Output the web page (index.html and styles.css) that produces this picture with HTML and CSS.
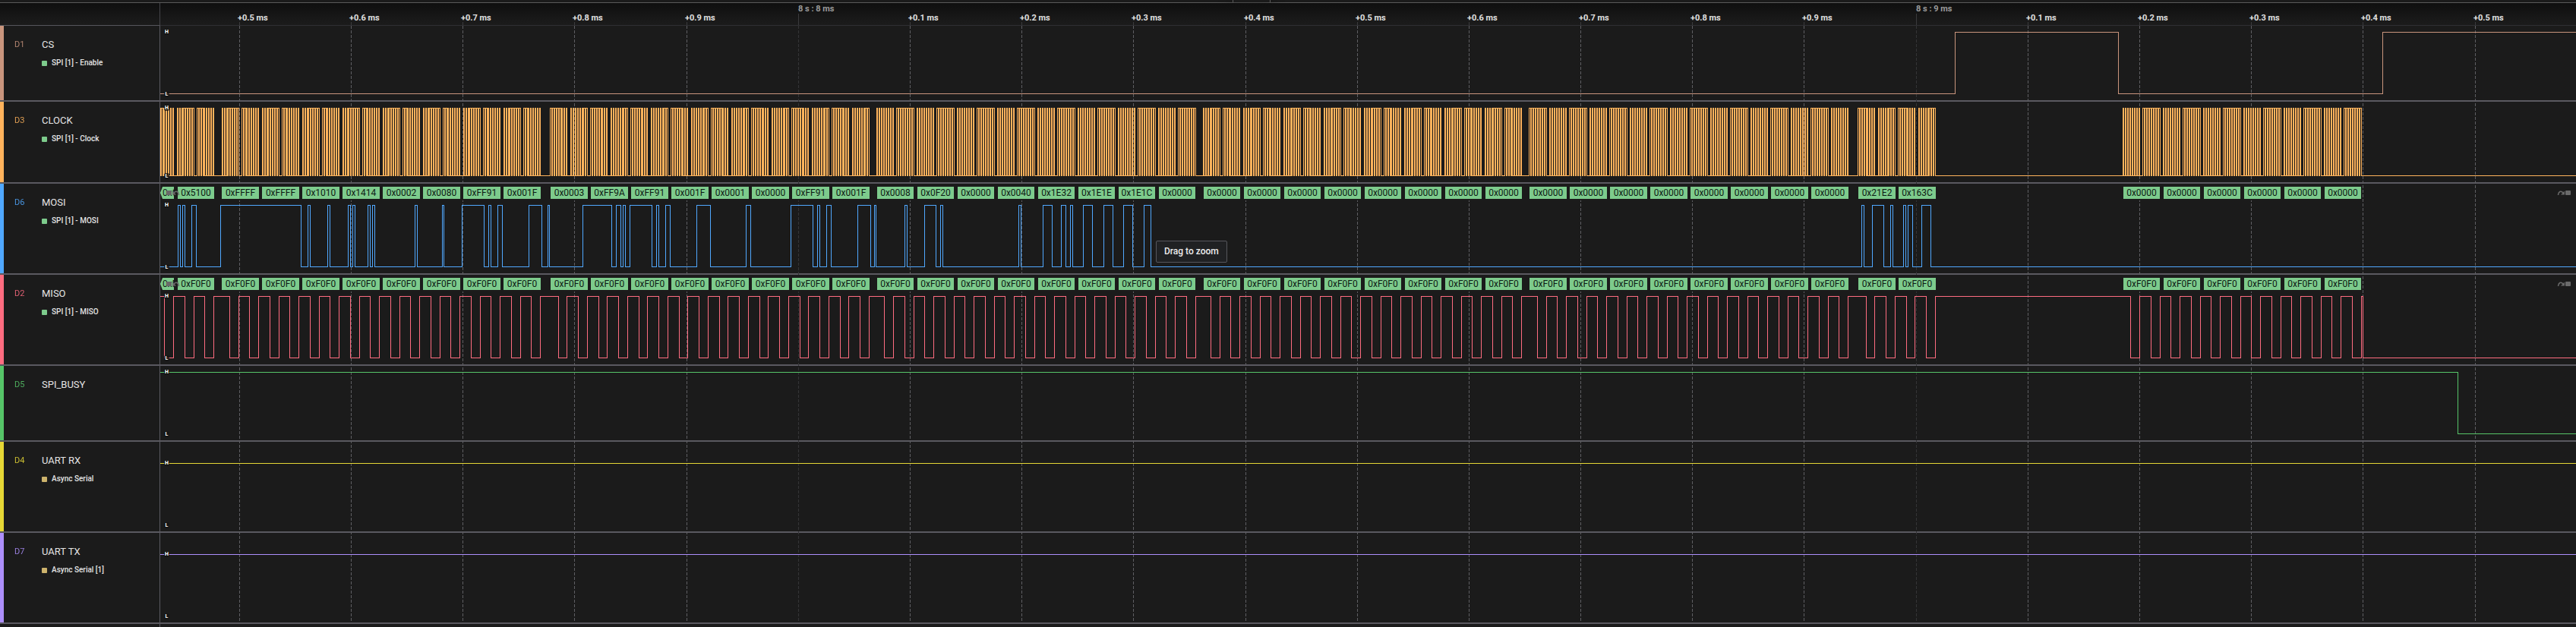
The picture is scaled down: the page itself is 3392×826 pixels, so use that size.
FILE: index.html
```html
<!DOCTYPE html>
<html lang="en">
<head>
<meta charset="utf-8">
<title>Logic analyzer capture</title>
<link rel="stylesheet" href="styles.css">
</head>
<body>
<div class="topbar"><div class="handle"></div></div>
<main class="board">
  <svg class="grid" id="grid" aria-hidden="true"></svg>
  <header class="ruler">
    <div class="corner"></div>
    <div class="scale" id="scale"></div>
  </header>

  <section class="channel short cs">
    <div class="info"><span class="pin">D1</span><div class="names"><span class="name">CS</span><span class="analyzer spi">SPI [1] - Enable</span></div></div>
    <div class="plot" data-signal="cs"></div>
  </section>
  <section class="channel medium clock">
    <div class="info"><span class="pin">D3</span><div class="names"><span class="name">CLOCK</span><span class="analyzer spi">SPI [1] - Clock</span></div></div>
    <div class="plot" data-signal="clock"></div>
  </section>
  <section class="channel mosi">
    <div class="info"><span class="pin">D6</span><div class="names"><span class="name">MOSI</span><span class="analyzer spi">SPI [1] - MOSI</span></div></div>
    <div class="plot" data-signal="mosi"><div class="tooltip" role="tooltip">Drag to zoom</div></div>
  </section>
  <section class="channel miso">
    <div class="info"><span class="pin">D2</span><div class="names"><span class="name">MISO</span><span class="analyzer spi">SPI [1] - MISO</span></div></div>
    <div class="plot" data-signal="miso"></div>
  </section>
  <section class="channel short busy">
    <div class="info"><span class="pin">D5</span><div class="names"><span class="name">SPI_BUSY</span></div></div>
    <div class="plot" data-signal="busy"></div>
  </section>
  <section class="channel rx">
    <div class="info"><span class="pin">D4</span><div class="names"><span class="name">UART RX</span><span class="analyzer serial">Async Serial</span></div></div>
    <div class="plot" data-signal="rx"></div>
  </section>
  <section class="channel tx">
    <div class="info"><span class="pin">D7</span><div class="names"><span class="name">UART TX</span><span class="analyzer serial">Async Serial [1]</span></div></div>
    <div class="plot" data-signal="tx"></div>
  </section>
  <div class="tail"></div>
</main>
<script src="traces.js"></script>
</body>
</html>
```

FILE: styles.css
```css
* { box-sizing: border-box; }

body {
  margin: 0;
  min-height: 100vh;
  display: flex;
  flex-direction: column;
  overflow: hidden;
  background: #1b1b1b;
  color: #e4e4e4;
  font-family: Roboto, "Liberation Sans", sans-serif;
}

.topbar {
  height: 4px;
  border-bottom: 1px solid #5a5a5a;
}

.handle {
  position: absolute;
  top: 0;
  left: 1623px;
  width: 50px;
  height: 3px;
  border: solid #5a5a5a;
  border-width: 0 1px;
  box-shadow: 0 8px 16px 4px rgba(0, 0, 0, 0.45);
}

.board {
  position: relative;
  flex: 1;
  display: flex;
  flex-direction: column;
}

.grid {
  position: absolute;
  top: 0;
  left: 211px;
  width: calc(100% - 211px);
  height: 816px;
  shape-rendering: crispEdges;
}

.grid line { stroke: #5e5e62; stroke-dasharray: 4 2; }
.grid .major { stroke: #343436; }
.grid .tick { stroke: #3a3a3c; stroke-dasharray: none; }

.ruler {
  display: flex;
  height: 30px;
  background: linear-gradient(#0f0f0f, #1b1b1b 90%);
}

.corner {
  width: 211px;
  border-right: 1px solid #45454a;
  border-bottom: 1px solid #56565c;
}

.scale {
  position: relative;
  flex: 1;
  border-bottom: 1px solid #2f2f33;
  font-size: 11px;
  font-weight: 700;
  line-height: 12px;
  white-space: nowrap;
}

.scale span {
  position: absolute;
  top: 14px;
  color: #e0e0e0;
}

.scale .major { top: 2px; color: #9a9a9a; }

.channel {
  display: flex;
  height: 120px;
  border-bottom: 2px solid #5a5960;
}

.channel.short { height: 100px; }
.channel.medium { height: 108px; }

.info {
  display: flex;
  width: 211px;
  padding: 17px 0 0 14px;
  border-left: 5px solid var(--color);
  border-right: 1px solid #5a5960;
  line-height: 16px;
}

.pin {
  width: 36px;
  font-size: 11px;
  color: var(--color);
  opacity: 0.85;
}

.names {
  display: flex;
  flex-direction: column;
  gap: 8px;
}

.name { font-size: 13px; }

.analyzer {
  display: flex;
  align-items: center;
  gap: 6px;
  font-size: 10px;
  font-weight: 500;
}

.analyzer::before {
  content: "";
  width: 7px;
  height: 7px;
  border-radius: 1px;
  background: var(--mark);
}

.spi { --mark: #7dcb8c; }
.serial { --mark: #cdb36c; }

.cs { --color: #c9957d; }
.clock { --color: #ffb35c; }
.mosi { --color: #50a8ff; }
.miso { --color: #ff6c80; }
.busy { --color: #56c568; }
.rx { --color: #e6d735; }
.tx { --color: #ad8ffc; }

.plot {
  position: relative;
  flex: 1;
  overflow: hidden;
}

.wave {
  display: block;
  width: 100%;
  height: 100%;
  shape-rendering: crispEdges;
}

.wave path { fill: none; stroke: var(--color); }

.level {
  position: absolute;
  left: 5px;
  width: 7px;
  height: 8px;
  margin-top: -4px;
  border-radius: 2px;
  background: rgba(20, 20, 20, 0.75);
  color: #fff;
  font-size: 7px;
  font-weight: 700;
  line-height: 9px;
  text-align: center;
}

.word {
  position: absolute;
  top: 4px;
  height: 16px;
  background: #7dcb8c;
  box-shadow: 0 0 0 2px #1b1b1b;
  color: #0e1a14;
  font-size: 12px;
  line-height: 16px;
  text-align: center;
}

.word.cut {
  overflow: hidden;
  padding-left: 3px;
  clip-path: polygon(0 50%, 3px 0, 100% 0, 100% 100%, 3px 100%);
  text-align: left;
}

.jump {
  position: absolute;
  top: 4px;
  width: 24px;
  height: 16px;
  padding: 0;
  border: 0;
  background: none;
  color: #6a6a6a;
}

.jump svg { display: block; }
.jump.prev { left: 5px; }
.jump.prev::before {
  content: "";
  position: absolute;
  inset: 4px 6px 4px 13px;
  background: #1b1b1b;
  opacity: 0.6;
  filter: blur(1px);
}
.jump.prev svg { position: relative; }
.jump.next { right: 1px; }

.tooltip {
  position: absolute;
  top: 75px;
  left: 1311px;
  padding: 5px 10px;
  border: 1px solid #56565c;
  border-radius: 2px;
  background: #202123;
  color: #ececec;
  font-size: 12px;
  font-weight: 500;
  line-height: 17px;
  white-space: nowrap;
}

.tail {
  flex: 1;
  width: 211px;
  border-right: 1px solid #5a5960;
}
```

FILE: traces.js
```js
const ORIGIN = 211;           // left edge of the plot area
const HALF = 1.472;           // half an SPI clock period
const BYTE = 26.49;
const WORD = 53;
const END = 4000;

// Bursts of 16-bit words: start position and MOSI values.
const bursts = [
  [180.15, ["0xC", "0x5100"]],
  [292.12, ["0xFFFF", "0xFFFF", "0x1010", "0x1414", "0x0002", "0x0080", "0xFF91", "0x001F"]],
  [724.8, ["0x0003", "0xFF9A", "0xFF91", "0x001F", "0x0001", "0x0000", "0xFF91", "0x001F"]],
  [1154.5, ["0x0008", "0x0F20", "0x0000", "0x0040", "0x1E32", "0x1E1E", "0x1E1C", "0x0000"]],
  [1584.2, Array(8).fill("0x0000")],
  [2013.98, Array(8).fill("0x0000")],
  [2446.75, ["0x21E2", "0x163C"]],
  [2795.45, Array(6).fill("0x0000")]
];

const words = bursts.flatMap(([start, values]) =>
  values.map((value, i) => ({ start: start + i * WORD, value })));

const clockEdges = words.flatMap(({ start }) =>
  [0, BYTE].flatMap(b => Array.from({ length: 16 }, (_, k) => start + b + k * HALF)));

const misoEdges = words.flatMap(({ start }) =>
  [0, BYTE].flatMap(b => [start + b + 7 * HALF, start + b + 15 * HALF]));

const signals = {
  cs: { top: 8, start: 0, edges: [2574, 2789, 3137] },
  clock: { top: 8, start: 0, edges: clockEdges },
  mosi: { top: 28, start: 0, words: w => w.value, edges: [
    234, 237, 240, 243, 252, 258, 290, 396, 405, 408, 431, 434, 458, 461, 464, 467,
    484, 487, 490, 493, 546, 549, 582, 584, 608, 637, 643, 646, 655, 661, 696, 713,
    721, 723, 767, 805, 811, 817, 820, 823, 829, 858, 864, 867, 876, 882, 917, 935,
    982, 988, 1041, 1070, 1076, 1079, 1088, 1094, 1129, 1146, 1151, 1153, 1191, 1194,
    1217, 1232, 1238, 1241, 1341, 1344, 1373, 1385, 1397, 1403, 1409, 1412, 1426, 1438,
    1453, 1465, 1479, 1491, 1506, 1515, 2451, 2454, 2465, 2480, 2489, 2492, 2506, 2509,
    2512, 2518, 2530, 2542] },
  miso: { top: 28, start: 1, words: w => w.value.length < 6 ? "0xF" : "0xF0F0",
    edges: [...misoEdges, 3111] },
  busy: { top: 8, start: 1, edges: [3236] },
  rx: { top: 28, start: 1, edges: [] },
  tx: { top: 28, start: 1, edges: [] }
};

function tracePath(edges, state, high, low) {
  const y = s => (s ? high : low) + 0.5;
  let d = `M-40 ${y(state)}`;
  for (const edge of edges) {
    const x = Math.floor(edge) - ORIGIN + 0.5;
    d += `H${x}`;
    state = 1 - state;
    d += `V${y(state)}`;
  }
  return `${d}H${END}`;
}

const arrow = '<path d="M1.500 11C2 6.500 5 4.500 8 8" fill="none" stroke="currentColor" stroke-width="1.500"/><path d="M10 5.500v5h-5z" fill="currentColor"/><rect x="11" y="5" width="7" height="6" rx="1" fill="currentColor"/>';

function jump(kind, label) {
  const flip = kind === "prev" ? ' transform="translate(21 0) scale(-1 1)"' : "";
  return `<button class="jump ${kind}" aria-label="${label}"><svg width="24" height="16"><g${flip}>${arrow}</g></svg></button>`;
}

for (const plot of document.querySelectorAll(".plot")) {
  const signal = signals[plot.dataset.signal];
  const low = plot.offsetHeight + 2 - 11;
  let html = `<svg class="wave"><path d="${tracePath(signal.edges, signal.start, signal.top, low)}"/></svg>`;
  html += `<span class="level" style="top:${signal.top}px">H</span>`;
  html += `<span class="level" style="top:${low + 1}px">L</span>`;
  if (signal.words) {
    for (const w of words) {
      const cut = w.start < ORIGIN;
      const left = cut ? 0 : Math.floor(w.start + 0.87) - ORIGIN;
      const right = Math.round(w.start + 48.8) - ORIGIN;
      html += `<span class="word${cut ? " cut" : ""}" style="left:${left}px;width:${right - left}px">${signal.words(w)}</span>`;
    }
    html += jump("prev", "Previous result") + jump("next", "Next result");
  }
  plot.insertAdjacentHTML("afterbegin", html);
}

let grid = "";
let labels = "";
for (let i = 0; i <= 20; i++) {
  const x = Math.floor(315.2 + 147.2 * i) - ORIGIN;
  const tenth = (i + 5) % 10;
  const major = tenth === 0;
  grid += `<line class="tick" x1="${x + 0.5}" x2="${x + 0.5}" y1="${major ? 14 : 25}" y2="30"/>`;
  grid += `<line class="${major ? "major" : "minor"}" x1="${x + 0.5}" x2="${x + 0.5}" y1="30" y2="816"/>`;
  labels += major
    ? `<span class="major" style="left:${x}px">8 s : ${i < 10 ? 8 : 9} ms</span>`
    : `<span style="left:${x - 2}px">+0.${tenth} ms</span>`;
}
document.getElementById("grid").innerHTML = grid;
document.getElementById("scale").innerHTML = labels;
```
